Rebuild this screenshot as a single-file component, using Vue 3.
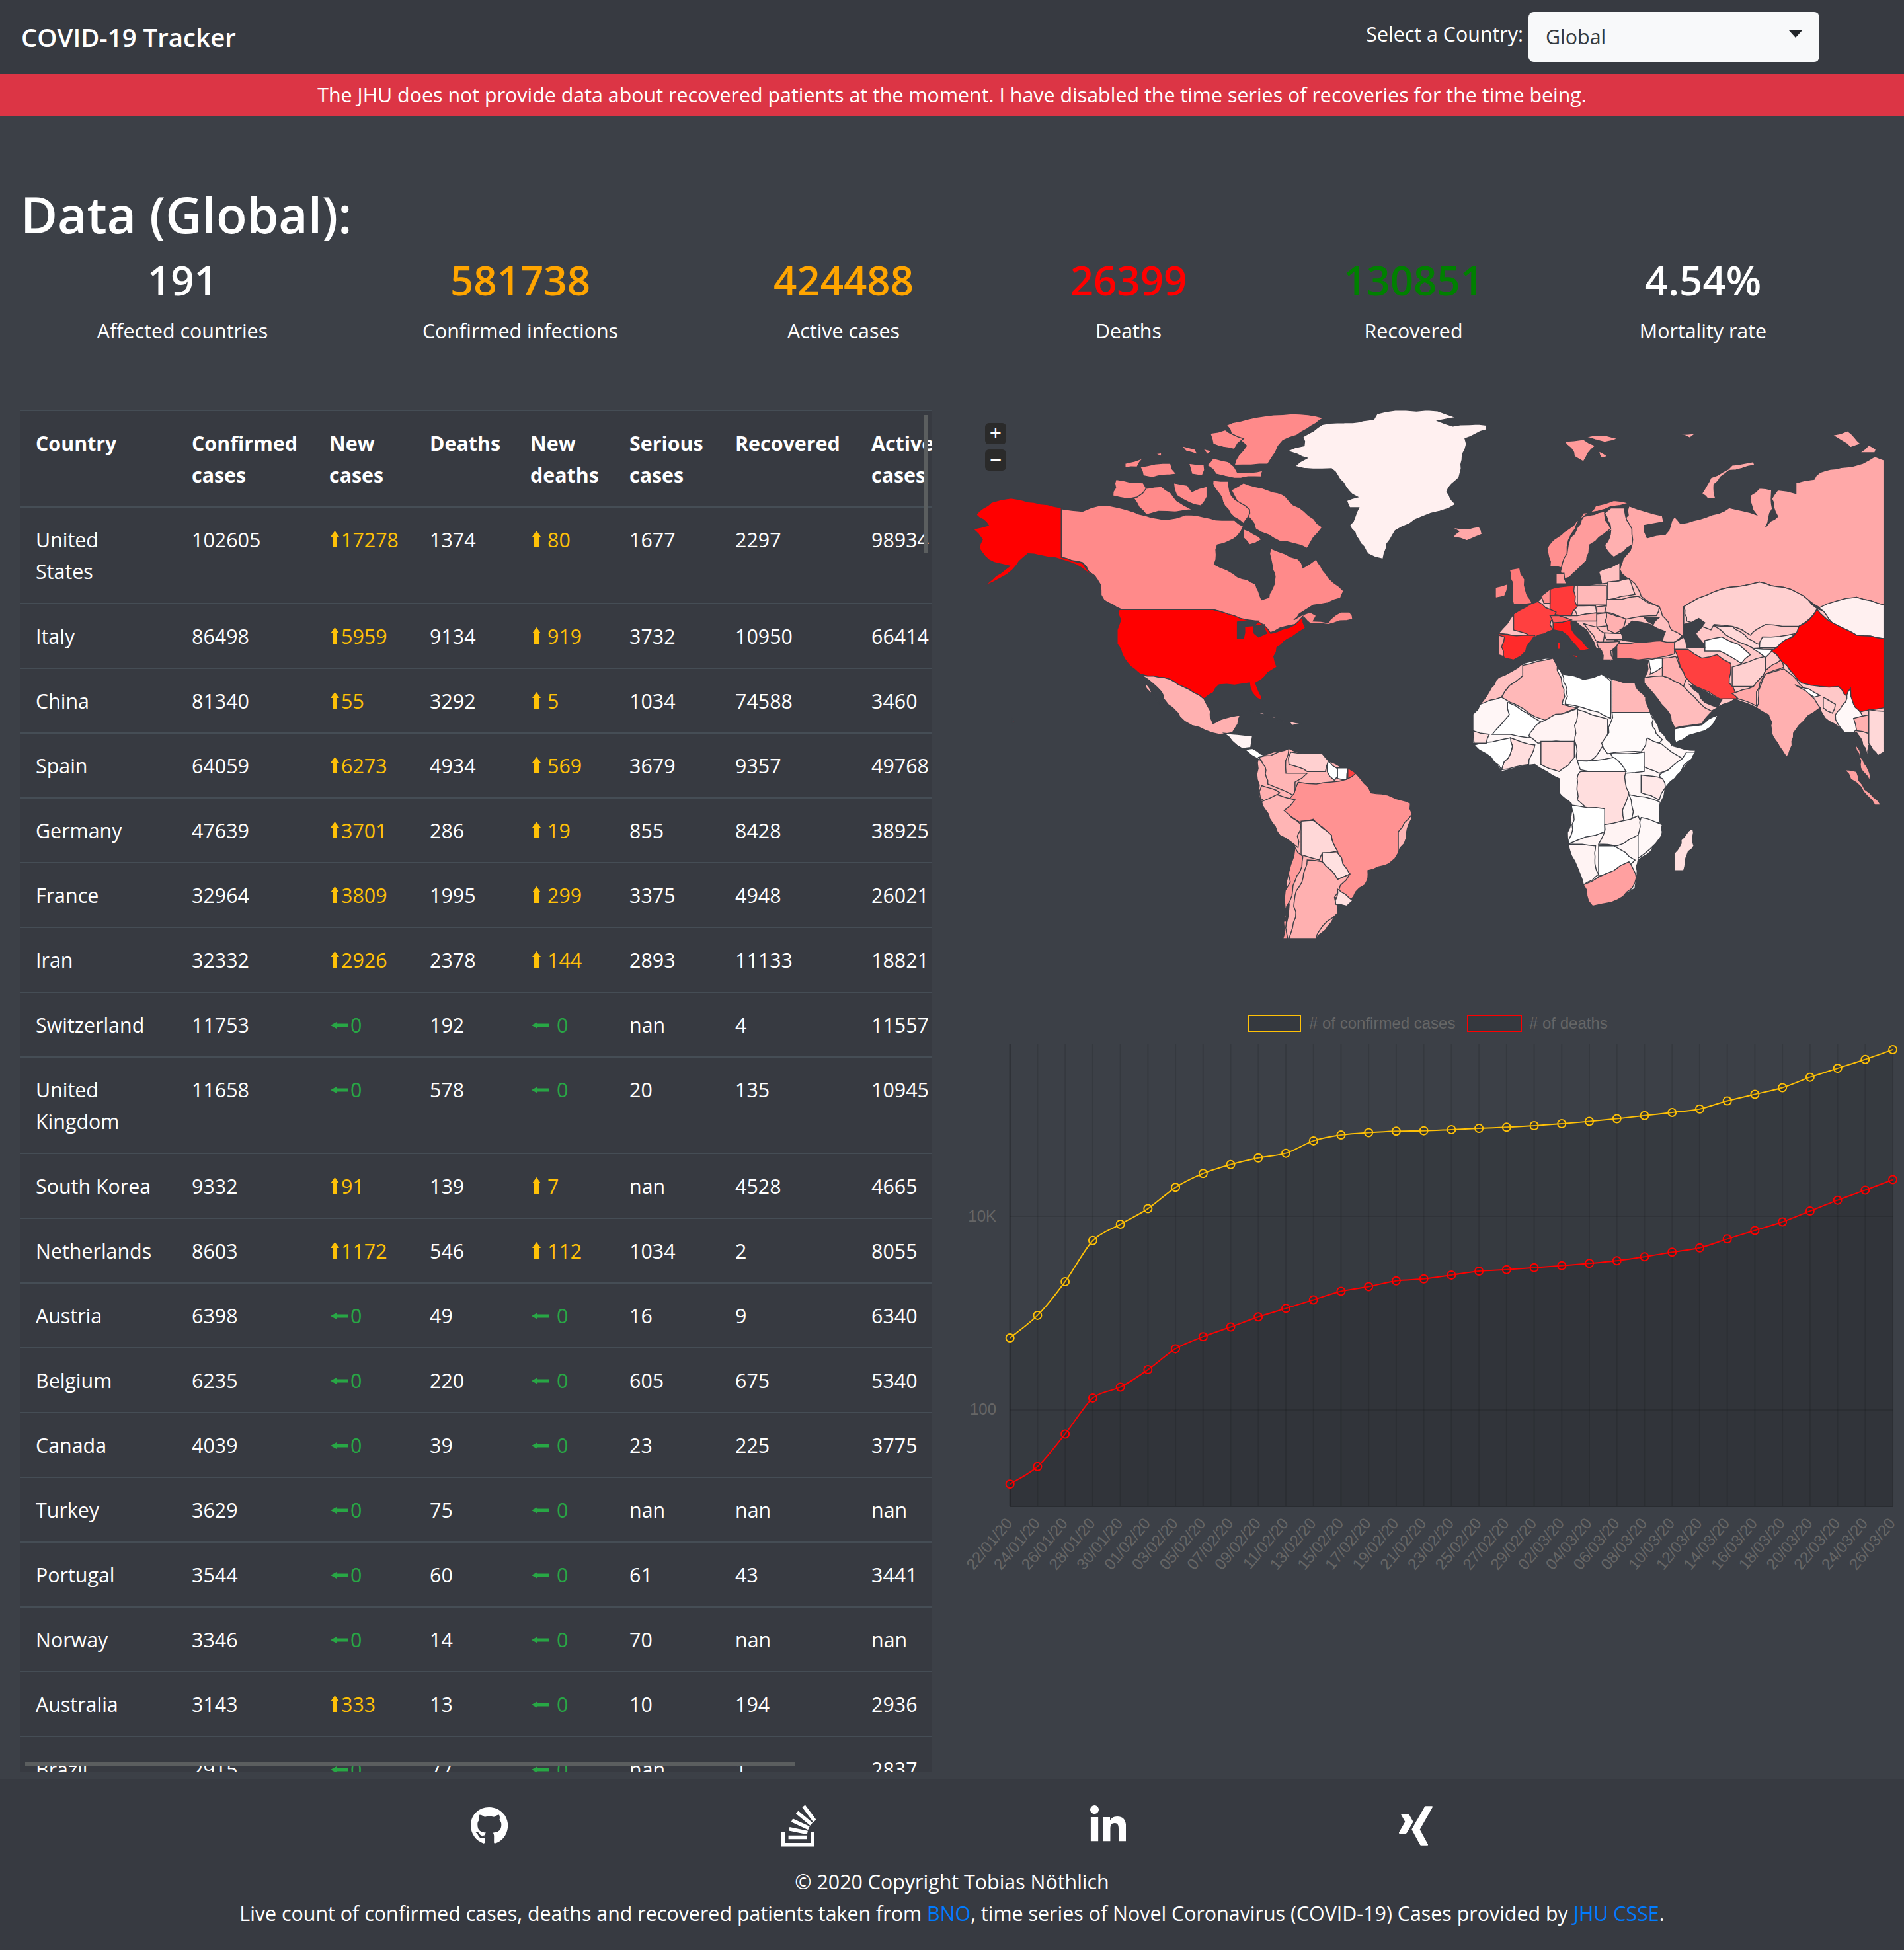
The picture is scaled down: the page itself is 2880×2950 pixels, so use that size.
<template>
  <div class="page">
    <nav class="navbar">
      <span class="brand">COVID-19 Tracker</span>
      <label class="select-label">Select a Country:</label>
      <button class="select-btn" type="button">
        <span>Global</span>
        <i class="caret"></i>
      </button>
    </nav>
    <div class="alert">
      The JHU does not provide data about recovered patients at the moment. I have disabled the time series of recoveries for the time being.
    </div>

    <main class="content">
      <h1 class="title">Data (Global):</h1>
      <div class="stats">
        <div v-for="s in stats" :key="s.label" class="stat">
          <div class="stat-value" :class="s.tone">{{ s.value }}</div>
          <div class="stat-label">{{ s.label }}</div>
        </div>
      </div>

      <div class="panels">
        <div class="table-wrap">
          <table class="cases">
            <colgroup>
              <col v-for="w in colWidths" :key="w.id" :style="{ width: w.px + 'px' }" />
            </colgroup>
            <thead>
              <tr>
                <th>Country</th>
                <th>Confirmed cases</th>
                <th>New cases</th>
                <th>Deaths</th>
                <th>New deaths</th>
                <th>Serious cases</th>
                <th>Recovered</th>
                <th>Active cases</th>
              </tr>
            </thead>
            <tbody>
              <tr v-for="r in rows" :key="r[0]">
                <td>{{ r[0] }}</td>
                <td>{{ r[1] }}</td>
                <td class="delta" :class="r[2] > 0 ? 'up' : 'flat'">
                  <svg v-if="r[2] > 0" class="arrow-up" viewBox="0 0 13 25"><path d="M6.5 0L13 9H10V25H3V9H0Z" /></svg>
                  <svg v-else class="arrow-left" viewBox="0 0 26 10"><path d="M0 5L9 0V2.5H26V7.5H9V10Z" /></svg>{{ r[2] }}
                </td>
                <td>{{ r[3] }}</td>
                <td class="delta" :class="r[4] > 0 ? 'up' : 'flat'">
                  <svg v-if="r[4] > 0" class="arrow-up wide" viewBox="0 0 13 25"><path d="M6.5 0L13 9H10V25H3V9H0Z" /></svg>
                  <svg v-else class="arrow-left wide" viewBox="0 0 26 10"><path d="M0 5L9 0V2.5H26V7.5H9V10Z" /></svg>{{ r[4] }}
                </td>
                <td>{{ r[5] }}</td>
                <td>{{ r[6] }}</td>
                <td>{{ r[7] }}</td>
              </tr>
            </tbody>
          </table>
          <div class="scroll-y"></div>
          <div class="scroll-x"></div>
        </div>

        <div class="side">
          <div class="map">
            <svg class="map-svg" viewBox="0 0 1568 1568" preserveAspectRatio="none">
              <polygon
                v-for="(c, i) in countries"
                :key="i"
                :points="c[1]"
                :fill="c[0]"
                class="land"
              />
            </svg>
            <div class="zoom-btns">
              <span class="zoom-btn">+</span>
              <span class="zoom-btn">−</span>
            </div>
          </div>

          <svg class="chart" viewBox="0 0 1440 920">
            <rect x="448" y="36" width="79" height="24" class="legend-box" stroke="#ffc107" />
            <text x="540" y="56" class="chart-text"># of confirmed cases</text>
            <rect x="780" y="36" width="81" height="24" class="legend-box" stroke="#ff0000" />
            <text x="873" y="56" class="chart-text"># of deaths</text>
            <g>
              <line v-for="(x, i) in xs" :key="'v' + i" :x1="x" :x2="x" y1="80" y2="779" :class="i === 0 ? 'axis' : 'grid'" />
              <line v-for="y in [340, 633]" :key="'h' + y" x1="88" x2="1423" :y1="y" :y2="y" class="grid" />
              <line x1="88" x2="1423" y1="779" y2="779" class="axis" />
            </g>
            <path :d="confirmedArea" class="area" />
            <path :d="deathsArea" class="area" />
            <path :d="confirmedLine" class="series" stroke="#ffc107" />
            <path :d="deathsLine" class="series" stroke="#ff0000" />
            <circle v-for="(p, i) in confirmedPts" :key="'c' + i" :cx="p[0]" :cy="p[1]" r="6" class="dot" stroke="#ffc107" />
            <circle v-for="(p, i) in deathsPts" :key="'d' + i" :cx="p[0]" :cy="p[1]" r="6" class="dot" stroke="#ff0000" />
            <text x="67" y="348" class="chart-text" text-anchor="end">10K</text>
            <text x="67" y="640" class="chart-text" text-anchor="end">100</text>
            <text
              v-for="(d, i) in dates"
              :key="d"
              :transform="`rotate(-50 ${xs[i] + 5} ${805})`"
              :x="xs[i] + 5"
              y="805"
              class="chart-text"
              text-anchor="end"
            >{{ d }}</text>
          </svg>
        </div>
      </div>
    </main>

    <footer class="footer">
      <div class="socials">
        <a class="social"><svg class="gh" viewBox="0 0 496 512"><path :d="icons.github" /></svg></a>
        <a class="social"><svg class="so" viewBox="0 0 384 512"><path :d="icons.stack" /></svg></a>
        <a class="social"><svg class="li" viewBox="0 0 448 512"><path :d="icons.linkedin" /></svg></a>
        <a class="social"><svg class="xi" viewBox="0 0 384 512"><path :d="icons.xing" /></svg></a>
      </div>
      <div class="copy">© 2020 Copyright Tobias Nöthlich</div>
      <div class="copy">
        Live count of confirmed cases, deaths and recovered patients taken from <a class="link">BNO</a>, time series of Novel Coronavirus (COVID-19) Cases provided by <a class="link">JHU CSSE</a>.
      </div>
    </footer>
  </div>
</template>

<script setup>
const stats = [
  { value: "191", label: "Affected countries", tone: "" },
  { value: "581738", label: "Confirmed infections", tone: "orange" },
  { value: "424488", label: "Active cases", tone: "orange" },
  { value: "26399", label: "Deaths", tone: "red" },
  { value: "130851", label: "Recovered", tone: "green" },
  { value: "4.54%", label: "Mortality rate", tone: "" },
];

const colWidths = [236, 208, 152, 152, 150, 160, 206, 138].map((px, id) => ({ px, id }));

const rows = [
  ["United States", 102605, 17278, 1374, 80, 1677, 2297, 98934],
  ["Italy", 86498, 5959, 9134, 919, 3732, 10950, 66414],
  ["China", 81340, 55, 3292, 5, 1034, 74588, 3460],
  ["Spain", 64059, 6273, 4934, 569, 3679, 9357, 49768],
  ["Germany", 47639, 3701, 286, 19, 855, 8428, 38925],
  ["France", 32964, 3809, 1995, 299, 3375, 4948, 26021],
  ["Iran", 32332, 2926, 2378, 144, 2893, 11133, 18821],
  ["Switzerland", 11753, 0, 192, 0, "nan", 4, 11557],
  ["United Kingdom", 11658, 0, 578, 0, 20, 135, 10945],
  ["South Korea", 9332, 91, 139, 7, "nan", 4528, 4665],
  ["Netherlands", 8603, 1172, 546, 112, 1034, 2, 8055],
  ["Austria", 6398, 0, 49, 0, 16, 9, 6340],
  ["Belgium", 6235, 0, 220, 0, 605, 675, 5340],
  ["Canada", 4039, 0, 39, 0, 23, 225, 3775],
  ["Turkey", 3629, 0, 75, 0, "nan", "nan", "nan"],
  ["Portugal", 3544, 0, 60, 0, 61, 43, 3441],
  ["Norway", 3346, 0, 14, 0, 70, "nan", "nan"],
  ["Australia", 3143, 333, 13, 0, 10, 194, 2936],
  ["Brazil", 2915, 0, 77, 0, "nan", 1, 2837],
];

const WATER = "#3c4047";

// traced shapes, in a 1568 x 1568 box stretched over the map area
const shapes = [
  // land under the countries, so no sea shows between neighbours
  ["#ffc0c0", "985,525 1030,512 1125,500 1205,575 1205,650 1190,675 1095,680 1100,650 1085,730 1060,690 1045,640 1025,612 990,640 960,660 900,650 925,595 965,560"],
  ["#ffc8c8", "1095,680 1190,675 1205,660 1205,575 1280,520 1425,580 1535,665 1535,870 1510,1000 1490,930 1470,930 1430,860 1395,910 1375,1000 1345,880 1325,860 1290,835 1250,870 1235,905 1190,918 1150,830 1140,775 1148,725 1095,720"],
  ["#ffb5b5", "505,1000 555,975 620,1010 665,1045 690,1100 755,1130 758,1160 735,1270 685,1320 655,1405 630,1395 635,1440 600,1512 545,1512 565,1255 510,1125"],
  // africa base
  ["#fff6f6", "858,878 870,850 900,780 940,735 990,720 1005,765 1040,780 1070,765 1087,780 1125,790 1150,873 1170,930 1188,968 1225,980 1205,1030 1175,1080 1165,1140 1170,1215 1130,1290 1125,1370 1085,1410 1055,1420 1040,1360 1030,1310 1015,1240 1020,1130 1000,1100 1000,1060 960,1020 905,1040 880,990 858,960"],
  ["#ffb8b8", "940,740 990,720 1000,765 1005,850 1030,860 985,900 960,885 905,830 940,770"],
  ["#ffc0c0", "900,775 940,735 940,770 905,830 870,850"],
  ["#ffffff", "1005,765 1040,780 1070,765 1085,785 1085,890 1040,860 1010,850"],
  ["#ffb8b8", "1087,780 1125,790 1150,873 1087,873"],
  ["#ffffff", "915,845 960,890 970,900 950,945 920,935 890,935 918,880"],
  ["#fff3f3", "965,905 1030,862 1030,900 1025,955 965,960 950,940"],
  ["#fff0f0", "1030,865 1080,892 1080,940 1050,1010 1030,1010 1026,955"],
  ["#fffafa", "1087,873 1150,873 1170,950 1140,985 1080,990 1070,960 1082,930"],
  ["#ffd6d6", "970,955 1025,955 1025,1000 1000,1040 970,1020"],
  ["#ffdede", "920,945 960,965 950,1020 905,1035"],
  ["#ffffff", "860,965 920,945 905,1035 880,990"],
  ["#ffdede", "858,925 885,935 880,960 860,960"],
  ["#fff3f3", "1145,945 1185,985 1210,1010 1165,1045 1135,1020"],
  ["#ffffff", "1085,990 1140,985 1140,1040 1110,1045 1090,1020"],
  ["#ffffff", "1210,985 1225,985 1190,1060 1170,1095 1165,1050"],
  ["#ffffff", "1030,1010 1090,1000 1110,1040 1050,1040 1035,1035"],
  ["#ffdede", "1035,1040 1110,1040 1115,1100 1105,1165 1110,1205 1070,1190 1030,1120"],
  ["#ffe8e8", "1135,1050 1170,1060 1175,1085 1165,1120 1135,1100"],
  ["#fffafa", "1115,1105 1165,1125 1165,1185 1120,1170"],
  ["#ffffff", "1020,1135 1075,1145 1075,1210 1015,1245"],
  ["#fff3f3", "1075,1190 1130,1165 1135,1215 1095,1250 1065,1245"],
  ["#fff8f8", "1135,1170 1170,1190 1165,1230 1130,1285 1130,1220"],
  ["#fff3f3", "1015,1245 1060,1250 1065,1330 1040,1360 1030,1310"],
  ["#ffffff", "1065,1250 1090,1250 1125,1290 1095,1325 1065,1335"],
  ["#ffa0a0", "1040,1360 1065,1338 1090,1320 1115,1295 1127,1340 1120,1370 1085,1410 1055,1420"],
  ["#ffe0e0", "1220,1200 1222,1250 1205,1320 1190,1320 1190,1270"],
  // middle east and asia
  ["#ffbcbc", "1140,775 1170,770 1205,800 1240,860 1252,870 1235,905 1190,918 1175,885 1150,830 1140,795"],
  ["#ffffff", "1190,920 1235,908 1262,880 1240,925 1192,958"],
  ["#ffb0b0", "1170,720 1192,715 1212,770 1205,800 1170,770"],
  ["#ffffff", "1148,725 1170,720 1170,745 1150,765"],
  ["#ff8888", "1095,680 1140,670 1190,675 1190,708 1130,725 1095,720"],
  ["#ff4040", "1190,695 1212,695 1235,720 1260,710 1283,735 1280,790 1293,835 1265,835 1225,800 1205,760"],
  ["#ffd0d0", "1285,745 1340,715 1340,755 1320,800 1285,800"],
  ["#ffa8a8", "1285,820 1320,800 1340,755 1365,725 1370,745 1340,765 1325,815 1325,855 1295,835"],
  ["#ffb0b0", "1325,860 1340,765 1370,750 1385,770 1430,860 1395,910 1375,1000 1360,960 1345,880"],
  ["#ffffff", "1240,670 1268,660 1315,710 1300,735 1265,700 1240,700"],
  ["#ffd8d8", "1255,628 1285,630 1345,690 1320,692 1275,655"],
  ["#ffe8e8", "1335,660 1390,650 1360,690 1330,690"],
  ["#ffffff", "1318,692 1352,695 1340,718"],
  // russia and north
  ["#ffa8a8", "1110,430 1120,400 1105,340 1115,290 1170,318 1172,335 1140,345 1145,380 1175,370 1190,320 1200,340 1280,295 1325,315 1315,260 1330,240 1350,245 1340,350 1360,320 1350,270 1360,245 1390,255 1390,225 1420,215 1430,195 1500,170 1520,150 1535,160 1535,570 1490,548 1470,570 1430,578 1410,555 1370,520 1330,505 1280,520 1230,550 1205,575 1205,620 1205,660 1185,640 1170,600 1165,575 1135,545 1125,510 1100,470"],
  ["#ffd0d0", "1205,575 1230,550 1280,520 1330,505 1370,520 1410,555 1425,580 1395,630 1340,625 1315,655 1285,630 1255,625 1250,640 1210,615"],
  ["#fff0f0", "1428,578 1490,548 1535,570 1535,665 1490,655 1450,620"],
  ["#ff0000", "1425,582 1450,620 1490,655 1535,665 1535,860 1490,875 1480,840 1460,800 1400,790 1375,740 1350,700 1385,660 1395,630"],
  ["#ffffff", "1388,795 1430,825 1420,830"],
  ["#ffd0d0", "1435,830 1455,850 1450,875 1435,860"],
  ["#fff8f8", "1455,880 1480,805 1485,850 1500,885 1485,930 1470,930"],
  ["#ffb0b0", "1485,890 1510,880 1525,945 1490,925"],
  ["#ffd8d8", "1510,865 1535,870 1535,985 1525,995 1510,960"],
  ["#ffa0a0", "1487,960 1497,1000 1512,1070 1500,1040"],
  ["#ffa0a0", "1470,1035 1490,1040 1530,1135 1520,1135"],
  ["#ffa8a8", "1245,270 1235,255 1250,210 1285,175 1320,165 1322,175 1280,190 1255,230 1258,270"],
  ["#ffa8a8", "1450,90 1475,78 1497,115 1480,125"],
  ["#ffa8a8", "1495,140 1510,118 1522,130 1520,140"],
  ["#ff9a9a", "1008,108 1040,102 1060,120 1040,165 1025,150"],
  ["#ff9a9a", "1045,95 1075,90 1097,100 1075,110"],
  ["#ff9a9a", "1065,135 1080,150 1070,155"],
  ["#ffa8a8", "1200,88 1225,85 1215,98"],
  // europe
  ["#ff8f8f", "980,410 1020,350 1060,290 1090,275 1115,282 1085,292 1040,310 1020,370 1015,440 1005,465 985,460"],
  ["#ff9c9c", "1015,400 1040,320 1075,305 1085,355 1055,395 1050,440 1020,490 1005,500"],
  ["#ffb0b0", "1085,296 1108,296 1115,340 1120,400 1090,435 1065,420 1060,400 1085,355 1075,310"],
  ["#ff9c9c", "995,480 1008,480 1012,510 995,510"],
  ["#ffc0c0", "1065,475 1100,450 1100,500 1070,510"],
  ["#ffc8c8", "1080,505 1115,495 1125,540 1080,555"],
  ["#ffc0c0", "1075,555 1130,545 1165,575 1160,600 1110,610 1075,590"],
  ["#ffb8b8", "1030,515 1078,515 1078,570 1030,570"],
  ["#ffd0d0", "1020,575 1060,572 1062,592 1030,600"],
  ["#ffb0b0", "1000,600 1030,600 1062,592 1062,615 1020,615"],
  ["#ffc0c0", "1062,575 1078,572 1075,592 1062,592"],
  ["#ffc0c0", "1062,595 1078,592 1092,625 1062,632"],
  ["#ffb0b0", "1078,592 1110,610 1105,640 1092,650 1080,640"],
  ["#ffc0c0", "1040,622 1062,632 1075,650 1072,680 1060,670"],
  ["#ffc8c8", "1075,648 1092,650 1110,650 1105,668 1078,668"],
  ["#ffb0b0", "1062,675 1100,672 1085,700 1090,725 1072,725"],
  ["#ff7a7a", "918,470 935,465 945,530 955,565 925,568"],
  ["#ff8888", "895,520 915,510 910,545 895,550"],
  ["#ff3a3a", "985,525 1025,515 1030,575 1020,600 985,595"],
  ["#ff9090", "970,545 985,525 985,565 975,565"],
  ["#ff4040", "925,595 965,560 995,590 985,625 990,640 960,660 945,650 925,640"],
  ["#ff2a2a", "900,650 960,655 945,700 925,725 910,720"],
  ["#ff9a9a", "900,655 910,660 908,715 900,710"],
  ["#ff1a1a", "990,620 1020,612 1025,650 1050,695 1035,700 1005,645 990,640"],
  ["#ff6060", "985,600 1000,600 1020,612 990,620"],
  ["#ff1a1a", "1018,710 1030,712 1030,720"],
  ["#ff1a1a", "997,675 1002,675 1002,695 997,695"],
  // canada, greenland, iceland
  ["#ff8a8a", "180,298 215,305 245,288 275,295 320,318 355,328 385,315 425,325 465,330 480,348 470,375 437,400 432,455 470,490 500,510 510,555 522,548 528,470 525,410 570,440 578,465 600,440 615,480 645,530 640,550 595,570 572,595 563,612 590,590 600,600 595,615 620,620 640,590 655,590 660,610 620,625 590,622 580,605 565,625 520,650 495,655 498,620 470,610 430,583 280,583 250,555 240,500 215,450 180,435"],
  ["#ff8a8a", "452,62 500,40 560,30 612,42 585,72 545,105 520,172 465,175 485,120 460,85"],
  ["#ff8a8a", "425,85 450,75 480,100 465,130 430,115"],
  ["#ff8a8a", "430,155 455,165 470,195 512,190 510,208 465,212 435,200 420,175"],
  ["#ff8a8a", "460,245 480,225 520,245 550,265 580,305 610,350 595,380 585,410 540,390 500,355 475,300"],
  ["#ff8a8a", "300,240 345,235 370,275 395,300 340,305 320,315 300,270"],
  ["#ff8a8a", "265,262 270,215 315,225 320,240 305,265 290,270"],
  ["#ff8a8a", "285,170 315,155 305,180 285,182"],
  ["#ff8a8a", "310,180 360,170 370,200 330,210 315,205"],
  ["#ff8a8a", "335,143 345,140 345,150"],
  ["#ff8a8a", "378,120 400,130 405,145 385,135"],
  ["#ff8a8a", "390,170 415,172 412,205 395,200"],
  ["#ff8a8a", "410,125 428,135 420,145"],
  ["#ff8a8a", "430,218 455,220 460,260 490,300 480,340 455,300 440,255"],
  ["#ff8a8a", "365,225 388,232 395,250 420,235 420,265 410,290 390,280 370,260"],
  ["#ff8a8a", "480,355 510,385 490,400 480,380"],
  ["#fff0f0", "552,135 580,120 578,95 610,60 660,55 695,45 700,30 730,20 800,22 830,40 800,50 825,65 880,62 880,75 845,100 840,160 835,210 815,250 830,285 775,320 730,360 715,410 710,440 685,425 670,385 655,345 670,295 655,295 650,275 668,265 645,225 625,185 565,178 585,155"],
  ["#ffa8a8", "820,350 850,355 868,348 873,370 848,388 825,378 835,362"],
  // usa
  ["#ff0000", "40,315 65,280 97,268 135,280 180,295 180,435 215,452 240,500 225,480 195,450 145,430 125,425 100,470 55,515 80,480 95,460 70,450 45,410 50,385 35,355 60,345"],
  ["#ff0000", "275,583 430,583 465,600 505,618 525,650 565,625 578,602 582,635 560,660 535,690 530,715 535,745 510,780 500,790 510,840 498,825 490,790 440,795 415,835 380,800 350,775 310,765 290,735 272,680 272,640"],
  ["#ff0000", "99,892 103,900 100,903"],
  [WATER, "470,618 505,615 498,628 482,630 480,665 470,665"],
  [WATER, "497,630 515,625 518,650 505,660 498,650"],
  // mexico, central america, caribbean
  ["#ffb0b0", "312,768 350,775 380,800 415,835 430,905 460,885 475,880 462,930 440,935 395,910 375,885 345,815 330,790"],
  ["#ffb0b0", "318,790 350,860 340,845 320,805"],
  ["#fff3f3", "448,932 470,935 495,938 492,972 478,975 462,955"],
  ["#ffffff", "482,978 495,975 522,1004 510,1010"],
  ["#ffc0c0", "490,868 530,885 550,900 525,885"],
  ["#ffc0c0", "555,898 575,905 560,910"],
  // south america
  ["#ffb5b5", "555,975 550,1045 585,1045 565,1070 565,1110 520,1075 505,1000 525,995"],
  ["#ffd0d0", "558,985 610,990 620,1010 615,1040 585,1040 555,1020"],
  ["#ffffff", "620,1010 638,1035 630,1065 618,1040"],
  ["#ffffff", "635,1030 652,1030 650,1065 635,1060"],
  ["#ff4040", "652,1030 666,1045 660,1060 652,1062"],
  ["#ff9292", "570,1070 600,1075 650,1062 665,1045 690,1100 755,1130 758,1160 735,1210 735,1270 720,1300 685,1320 680,1360 655,1405 635,1370 655,1330 635,1265 625,1220 595,1175 575,1185 548,1160 548,1130"],
  ["#ffb0b0", "510,1080 540,1100 515,1125 508,1115"],
  ["#ffb5b5", "510,1125 535,1105 565,1120 547,1150 575,1190 570,1255 540,1220"],
  ["#ffd8d8", "575,1180 595,1178 625,1220 635,1265 610,1270 605,1290 575,1275"],
  ["#ffe0e0", "610,1270 635,1270 655,1330 635,1345 610,1295"],
  ["#ffb0b0", "585,1290 610,1295 635,1345 655,1330 630,1395 635,1440 605,1490 600,1512 555,1512 565,1390"],
  ["#ff9a9a", "565,1255 578,1280 560,1390 553,1512 545,1512 550,1450"],
  ["#ffe0e0", "635,1372 660,1405 650,1420 632,1415"],
  // inland seas
  [WATER, "1100,640 1120,615 1150,625 1175,645 1170,670 1130,675 1105,670"],
  [WATER, "1140,605 1165,605 1155,625"],
  [WATER, "1205,625 1230,608 1240,620 1225,650 1240,690 1210,690 1205,660"],
  [WATER, "1050,400 1085,360 1075,400 1090,435 1105,435 1100,450 1065,475 1065,510 1025,515 1015,495 1045,445"],
  [WATER, "1130,790 1140,790 1190,915 1185,965 1165,925 1150,870"],
  [WATER, "1215,795 1235,810 1268,838 1262,860 1240,845"],
];

// adds small wiggles to the long slanted edges so coasts look less like a polygon;
// edges that run straight along an axis stay straight, like the real borders do
const wiggle = (a, b) => {
  const s = Math.sin(a * 12.9898 + b * 78.233) * 43758.5453;
  return s - Math.floor(s) - 0.5;
};
const roughen = (pts) => {
  const out = [];
  pts.forEach((p, i) => {
    const q = pts[(i + 1) % pts.length];
    out.push(p);
    const len = Math.hypot(q[0] - p[0], q[1] - p[1]);
    if (len < 18 || p[0] === q[0] || p[1] === q[1]) return;
    const [a, b] = p[0] < q[0] ? [p, q] : [q, p];
    const mx = (a[0] + b[0]) / 2;
    const my = (a[1] + b[1]) / 2;
    const k = wiggle(mx, my) * 0.16;
    out.push([mx - (b[1] - a[1]) * k, my + (b[0] - a[0]) * k]);
  });
  return out;
};
const countries = shapes.map(([fill, str]) => {
  let pts = str.split(" ").map((s) => s.split(",").map(Number));
  pts = roughen(roughen(roughen(pts)));
  return [fill, pts.map((p) => `${Math.min(p[0], 1535).toFixed(1)},${Math.min(p[1], 1512).toFixed(1)}`).join(" ")];
});

const dates = [
  "22/01/20", "24/01/20", "26/01/20", "28/01/20", "30/01/20", "01/02/20", "03/02/20", "05/02/20", "07/02/20",
  "09/02/20", "11/02/20", "13/02/20", "15/02/20", "17/02/20", "19/02/20", "21/02/20", "23/02/20", "25/02/20",
  "27/02/20", "29/02/20", "02/03/20", "04/03/20", "06/03/20", "08/03/20", "10/03/20", "12/03/20", "14/03/20",
  "16/03/20", "18/03/20", "20/03/20", "22/03/20", "24/03/20", "26/03/20",
];

// y values read off the chart
const confirmedY = [893, 835, 748, 642, 600, 560, 505, 469, 446, 429, 417, 385, 370, 364, 360, 359, 356, 353, 350, 346, 341, 335, 328, 320, 312, 303, 282, 265, 248, 221, 198, 175, 150];
const deathsY = [1270, 1225, 1141, 1048, 1020, 975, 921, 890, 865, 839, 817, 795, 773, 761, 746, 741, 731, 721, 717, 712, 707, 701, 694, 684, 672, 661, 638, 616, 594, 566, 538, 512, 485];

const xs = dates.map((_, i) => 87.7 + i * 41.73);
const toPts = (ys) => ys.map((y, i) => [xs[i], (y * 920) / 1568]);
const confirmedPts = toPts(confirmedY);
const deathsPts = toPts(deathsY);

const smooth = (pts) => {
  let d = `M${pts[0][0]} ${pts[0][1]}`;
  for (let i = 0; i < pts.length - 1; i++) {
    const p0 = pts[Math.max(i - 1, 0)];
    const p1 = pts[i];
    const p2 = pts[i + 1];
    const p3 = pts[Math.min(i + 2, pts.length - 1)];
    const c1x = p1[0] + (p2[0] - p0[0]) * 0.14;
    const c1y = p1[1] + (p2[1] - p0[1]) * 0.14;
    const c2x = p2[0] - (p3[0] - p1[0]) * 0.14;
    const c2y = p2[1] - (p3[1] - p1[1]) * 0.14;
    d += `C${c1x} ${c1y} ${c2x} ${c2y} ${p2[0]} ${p2[1]}`;
  }
  return d;
};

const confirmedLine = smooth(confirmedPts);
const deathsLine = smooth(deathsPts);
const closeArea = (line) => `${line}L${xs[xs.length - 1]} 779L${xs[0]} 779Z`;
const confirmedArea = closeArea(confirmedLine);
const deathsArea = closeArea(deathsLine);

const icons = {
  github: "M165.9 397.4c0 2-2.3 3.6-5.2 3.6-3.3 0-5.6-1.6-5.6-3.6 0-2 2.3-3.6 5.2-3.6 3-.3 5.6 1.3 5.6 3.6zm-31.1-4.5c-.7 2 1.3 4.3 4.3 4.9 2.6 1 5.6 0 6.2-2s-1.3-4.3-4.3-5.2c-2.6-.7-5.5.3-6.2 2.3zm44.2-1.7c-2.9.7-4.9 2.6-4.6 4.9.3 2 2.9 3.3 5.9 2.6 2.9-.7 4.9-2.6 4.6-4.6-.3-1.9-3-3.2-5.9-2.9zM244.8 8C106.1 8 0 113.3 0 252c0 110.9 69.8 205.8 169.5 239.2 12.8 2.3 17.3-5.6 17.3-12.1 0-6.2-.3-40.4-.3-61.4 0 0-70 15-84.7-29.8 0 0-11.4-29.1-27.8-36.6 0 0-22.9-15.7 1.6-15.4 0 0 24.9 2 38.6 25.8 21.9 38.6 58.6 27.5 72.9 20.9 2.3-16 8.8-27.1 16-33.7-55.9-6.2-112.3-14.3-112.3-110.5 0-27.5 7.6-41.3 23.6-58.9-2.6-6.5-11.1-33.3 2.6-67.9 20.9-6.5 69 27 69 27 20-5.6 41.5-8.5 62.8-8.5s42.8 2.9 62.8 8.5c0 0 48.1-33.6 69-27 13.7 34.7 5.2 61.4 2.6 67.9 16 17.7 25.8 31.5 25.8 58.9 0 96.5-58.9 104.2-114.8 110.5 9.2 7.9 17 22.9 17 46.4 0 33.7-.3 75.4-.3 83.6 0 6.5 4.6 14.4 17.3 12.1C428.2 457.8 496 362.9 496 252 496 113.3 383.5 8 244.8 8z",
  stack: "M290.7 311L95 269.7 86.8 309l195.7 41zm51-87L188.2 95.7l-25.5 30.8 153.5 128.3zm-31.2 39.7L129.2 179l-16.7 36.5L293.7 300zM262 32l-32 24 119.3 160.3 32-24zm20.5 328h-200v39.7h200zm39.7 80H42.7V320h-40v160h359.5V320h-40z",
  linkedin: "M100.28 448H7.4V148.9h92.88zM53.79 108.1C24.09 108.1 0 83.5 0 53.8a53.79 53.79 0 0 1 107.58 0c0 29.7-24.1 54.3-53.79 54.3zM447.9 448h-92.68V302.4c0-34.7-.7-79.2-48.29-79.2-48.29 0-55.69 37.7-55.69 76.7V448h-92.78V148.9h89.08v40.8h1.3c12.4-23.5 42.69-48.3 87.88-48.3 94 0 111.28 61.9 111.28 142.3V448z",
  xing: "M162.7 210c-1.8 3.3-25.2 44.4-70.1 123.5-4.9 8.3-10.8 12.5-17.7 12.5H9.8c-7.7 0-12.1-7.5-8.5-14.4l69-121.3c.2 0 .2-.1 0-.3l-43.9-75.6c-4.3-7.8.3-14.1 8.5-14.1H100c7.3 0 13.3 4.1 18 12.2l44.7 77.5zM382.6 46.1l-144 253v.3L330.2 466c3.9 7.1.2 14.1-8.5 14.1h-65.2c-7.6 0-13.6-4-18-12.2l-92.4-168.5c3.3-5.8 51.5-90.8 144.8-255.2 4.6-8.1 10.4-12.2 17.5-12.2h65.7c8 0 12.3 6.7 8.5 14.1z",
};
</script>

<style>
body {
  margin: 0;
  background: #3c4047;
}
</style>

<style scoped>
.page {
  width: 2880px;
  height: 2950px;
  overflow: hidden;
  background: #3c4047;
  color: #fff;
  font-family: "Open Sans", "Liberation Sans", sans-serif;
  font-size: 30.4px;
  line-height: 48px;
}

.navbar {
  display: flex;
  align-items: center;
  height: 112px;
  padding-left: 32px;
  padding-right: 128px;
  background: #373a41;
  box-sizing: border-box;
}

.brand {
  font-size: 38.4px;
  font-weight: 600;
  margin-right: auto;
}

.select-label {
  margin-right: 8px;
  margin-top: -8px;
}

.select-btn {
  display: flex;
  align-items: center;
  justify-content: space-between;
  width: 440px;
  height: 76px;
  padding: 0 26px;
  border: 0;
  border-radius: 8px;
  background: #f8f9fa;
  color: #343a40;
  font: inherit;
  box-sizing: border-box;
}

.caret {
  width: 0;
  height: 0;
  margin-top: -10px;
  border-top: 11px solid #212529;
  border-left: 10px solid transparent;
  border-right: 10px solid transparent;
}

.alert {
  height: 64px;
  line-height: 64px;
  text-align: center;
  background: #dc3545;
}

.content {
  padding-top: 99px;
}

.title {
  margin: 0 0 14px 31px;
  font-size: 76.5px;
  font-weight: 600;
  line-height: 96px;
}

.stats {
  display: grid;
  grid-template-columns: 552px 470px 508px 354px 508px 368px;
  margin-bottom: 95px;
  text-align: center;
}

.stat-value {
  margin-bottom: 15px;
  font-size: 61.8px;
  font-weight: 600;
  line-height: 77px;
}

.orange {
  color: orange;
}

.red {
  color: red;
}

.green {
  color: green;
}

.panels {
  display: flex;
  padding-left: 30px;
  padding-bottom: 12px;
}

.table-wrap {
  position: relative;
  flex: none;
  width: 1380px;
  height: 2060px;
  overflow: hidden;
  background: #373a41;
}

.cases {
  table-layout: fixed;
  width: 1402px;
  border-collapse: collapse;
  background: #373a41;
}

.cases th,
.cases td {
  padding: 25px 24px 23px;
  text-align: left;
  vertical-align: top;
  border-top: 2px solid #454d55;
}

.cases th {
  font-weight: 700;
}

.cases .delta {
  padding-right: 0;
  white-space: nowrap;
}

.up {
  color: #ffc107;
}

.flat {
  color: #28a745;
}

.arrow-up,
.arrow-left {
  fill: currentColor;
}

.arrow-up {
  width: 13px;
  height: 25px;
  margin: 0 3px 0 2px;
}

.arrow-up.wide {
  margin-right: 10px;
  margin-left: 3px;
}

.arrow-left {
  width: 26px;
  height: 10px;
  margin: 0 4px 6px 2px;
}

.arrow-left.wide {
  margin-right: 12px;
}

.scroll-y {
  position: absolute;
  top: 8px;
  right: 6px;
  width: 6px;
  height: 208px;
  background: #5b5e5f;
}

.scroll-x {
  position: absolute;
  left: 8px;
  bottom: 8px;
  width: 1164px;
  height: 6px;
  background: #5b5e5f;
}

.side {
  flex: none;
  width: 1440px;
  margin-left: 30px;
}

.map {
  position: relative;
  height: 840px;
  margin-top: -10px;
}

.map-svg {
  display: block;
  width: 1440px;
  height: 840px;
}

.land {
  stroke: #3c4047;
  stroke-width: 1.5;
  vector-effect: non-scaling-stroke;
}

.zoom-btns {
  position: absolute;
  top: 30px;
  left: 50px;
  display: flex;
  flex-direction: column;
  gap: 8px;
}

.zoom-btn {
  width: 32px;
  height: 32px;
  border-radius: 6px;
  background: #2a2a2a;
  color: #fff;
  font-size: 32px;
  line-height: 30px;
  text-align: center;
}

.chart {
  display: block;
  width: 1440px;
  height: 920px;
  margin-top: 50px;
  overflow: visible;
}

.legend-box {
  fill: rgba(0, 0, 0, 0.1);
  stroke-width: 2;
}

.chart-text {
  fill: #666;
  font-family: "Liberation Sans", sans-serif;
  font-size: 24px;
}

.grid {
  stroke: rgba(0, 0, 0, 0.1);
  stroke-width: 2;
}

.axis {
  stroke: rgba(0, 0, 0, 0.3);
  stroke-width: 2;
}

.area {
  fill: rgba(0, 0, 0, 0.09);
}

.series {
  fill: none;
  stroke-width: 2;
}

.dot {
  fill: rgba(0, 0, 0, 0.1);
  stroke-width: 2;
}

.footer {
  height: 258px;
  box-sizing: border-box;
  padding-top: 34px;
  background: #373a41;
  text-align: center;
}

.socials {
  display: grid;
  grid-template-columns: repeat(4, 468px);
  width: 1872px;
  height: 72px;
  margin: 0 auto 25px;
  transform: translateX(2px);
}

.social {
  display: flex;
  align-items: center;
  justify-content: center;
}

.social svg {
  fill: #fff;
  display: block;
}

.gh {
  height: 58px;
}

.so {
  height: 72px;
}

.li {
  height: 62px;
}

.xi {
  height: 68px;
  margin-right: 6px;
}

.link {
  color: #007bff;
}
</style>
